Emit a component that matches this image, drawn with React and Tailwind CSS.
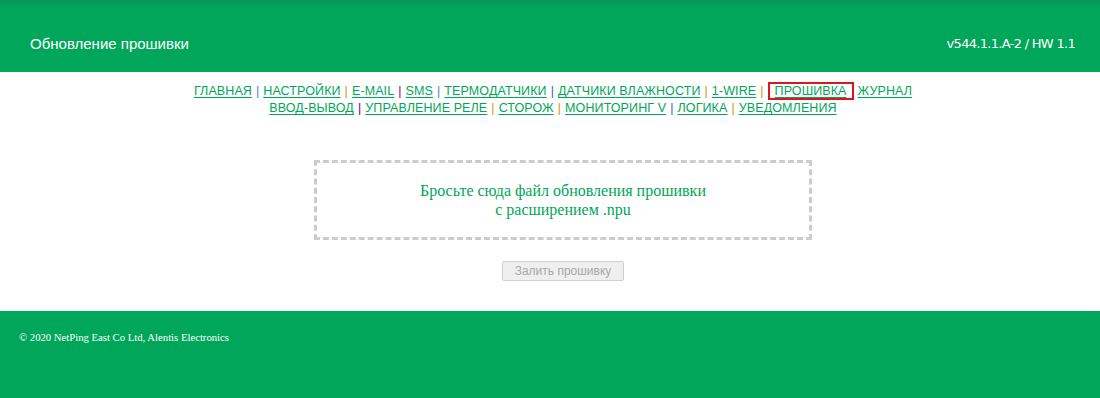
const links1 = [
  { t: 'ГЛАВНАЯ', c: 'text-[#3c8dbc]' },
  { t: 'НАСТРОЙКИ', c: 'text-[#e08e0b]' },
  { t: 'E-MAIL', c: 'text-[#800080]' },
  { t: 'SMS', c: 'text-[#3c8dbc]' },
  { t: 'ТЕРМОДАТЧИКИ', c: 'text-[#3c5dbc]' },
  { t: 'ДАТЧИКИ ВЛАЖНОСТИ', c: 'text-[#e08e0b]' },
  { t: '1-WIRE', c: 'text-[#e08e0b]' },
];

const links2 = [
  { t: 'ВВОД-ВЫВОД', c: 'text-[#800080]' },
  { t: 'УПРАВЛЕНИЕ РЕЛЕ', c: 'text-[#e08e0b]' },
  { t: 'СТОРОЖ', c: 'text-[#e08e0b]' },
  { t: 'МОНИТОРИНГ V', c: 'text-[#3c5dbc]' },
  { t: 'ЛОГИКА', c: 'text-[#e08e0b]' },
];

const Link = ({ children }) => (
  <a href="#" className="text-[#00a65a] underline underline-offset-2">
    {children}
  </a>
);

export default function App() {
  return (
    <div className="w-[1100px] h-[398px] bg-white flex flex-col font-['Liberation_Sans',Arial,sans-serif]">
      {/* Шапка */}
      <header className="h-[72px] bg-[linear-gradient(to_bottom,#07965a_0px,#00a65a_8px)] flex items-center justify-between pl-[30px] pr-[25px] pt-[16px] text-white">
        <div className="text-[15px]">Обновление прошивки</div>
        <div className="text-[13px] font-['DejaVu_Sans',sans-serif] tracking-[-0.7px]">v544.1.1.A-2 / HW 1.1</div>
      </header>

      {/* Меню */}
      <nav className="pt-[10px] pl-[6px] text-[12.5px] leading-[16px] text-center tracking-[0.1px]">
        <div className="flex justify-center items-center">
          {links1.map((l) => (
            <span key={l.t}>
              <Link>{l.t}</Link>
              <span className={`${l.c} px-[4px]`}>|</span>
            </span>
          ))}
          <span className="border-2 border-[#e0141e] px-[5px] leading-[14px] mr-[4px]">
            <Link>ПРОШИВКА</Link>
          </span>
          <Link>ЖУРНАЛ</Link>
        </div>
        <div className="flex justify-center items-center">
          {links2.map((l) => (
            <span key={l.t}>
              <Link>{l.t}</Link>
              <span className={`${l.c} px-[4px]`}>|</span>
            </span>
          ))}
          <Link>УВЕДОМЛЕНИЯ</Link>
        </div>
      </nav>

      {/* Загрузка */}
      <main className="flex-1 flex flex-col items-center pt-[44px] pl-[26px]">
        <div className="w-[498px] h-[80px] border-[3px] border-dashed border-[#cccccc] flex flex-col items-center justify-center font-['Liberation_Serif',serif] text-[16px] leading-[19px] text-[#00a65a]">
          <div>Бросьте сюда файл обновления прошивки</div>
          <div>с расширением .npu</div>
        </div>
        <button
          disabled
          className="mt-[21px] w-[122px] h-[20px] border border-[#d0d0d0] rounded-[2px] bg-[#efefef] text-[#a8a8a8] text-[12px] leading-[18px]"
        >
          Залить прошивку
        </button>
      </main>

      {/* Подвал */}
      <footer className="h-[87px] bg-[#00a65a] pl-[19px] pt-[18px] font-['Liberation_Serif',serif] text-[10.7px] text-white">
        © 2020 NetPing East Co Ltd, Alentis Electronics
      </footer>
    </div>
  );
}
